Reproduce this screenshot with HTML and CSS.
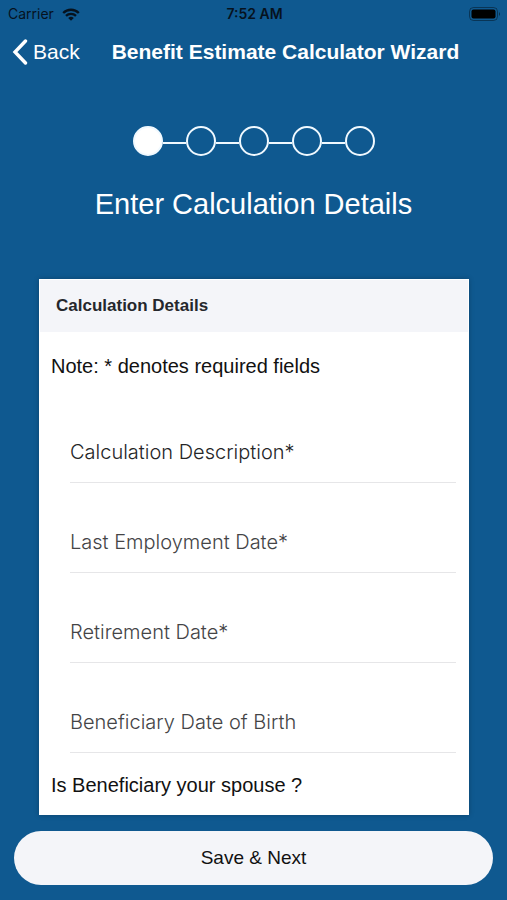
FILE: index.html
```html
<!DOCTYPE html>
<html lang="en">
<head>
  <meta charset="utf-8">
  <meta name="viewport" content="width=device-width, initial-scale=1">
  <title>Benefit Estimate Calculator Wizard</title>
  <link rel="stylesheet" href="styles.css">
</head>
<body>
  <div class="status-bar">
    <div class="carrier">
      <span>Carrier</span>
      <svg class="wifi" viewBox="0 0 18 13" aria-hidden="true">
        <path d="M1.2 5a11 11 0 0 1 15.6 0M4 7.9a7 7 0 0 1 10 0" fill="none" stroke="currentColor" stroke-width="2.3"/>
        <path d="M6.2 10a4 4 0 0 1 5.6 0L9 12.8Z" fill="currentColor"/>
      </svg>
    </div>
    <time class="clock">7:52 AM</time>
    <svg class="battery" viewBox="0 0 32 14" aria-hidden="true">
      <rect x="0.5" y="0.5" width="28" height="13" rx="4" fill="none" stroke="currentColor" opacity="0.4"/>
      <rect x="2.500" y="2.500" width="24" height="9" rx="2" fill="currentColor"/>
      <path d="M30 5q2 2 0 4Z" fill="currentColor" opacity="0.5"/>
    </svg>
  </div>

  <header class="nav">
    <a class="back" href="#">
      <svg class="chevron" viewBox="0 0 16 26" aria-hidden="true">
        <path d="M13.5 2 3 13l10.500 11" fill="none" stroke="currentColor" stroke-width="3.4" stroke-linecap="round"/>
      </svg>
      <span>Back</span>
    </a>
    <h1 class="nav-title">Benefit Estimate Calculator Wizard</h1>
  </header>

  <ol class="steps" aria-label="Progress">
    <li class="step current" aria-current="step"></li>
    <li class="step"></li>
    <li class="step"></li>
    <li class="step"></li>
    <li class="step"></li>
  </ol>
  <h2 class="step-title">Enter Calculation Details</h2>

  <form class="form">
    <section class="card">
      <h3 class="card-header">Calculation Details</h3>
      <p class="note">Note: * denotes required fields</p>
      <div class="fields">
        <input class="field strong" type="text" aria-label="Calculation Description" placeholder="Calculation Description*" required>
        <input class="field" type="text" aria-label="Last Employment Date" placeholder="Last Employment Date*" required>
        <input class="field" type="text" aria-label="Retirement Date" placeholder="Retirement Date*" required>
        <input class="field" type="text" aria-label="Beneficiary Date of Birth" placeholder="Beneficiary Date of Birth">
      </div>
      <p class="question">Is Beneficiary your spouse ?</p>
    </section>
    <button class="save" type="submit">Save &amp; Next</button>
  </form>
</body>
</html>
```
FILE: styles.css
```css
*,
*::before,
*::after {
  box-sizing: border-box;
}

body {
  display: flex;
  flex-direction: column;
  min-height: 100vh;
  margin: 0;
  background: #0f5990;
  color: #fff;
  font-family: "Liberation Sans", Arial, sans-serif;
}

h1,
h2,
h3,
p {
  margin: 0;
}

.status-bar {
  display: grid;
  grid-template-columns: 1fr auto 1fr;
  align-items: center;
  height: 28px;
  padding: 0 6px 0 8px;
  color: #06121e;
  font: 400 14px/16px Inter, sans-serif;
}

.carrier {
  display: flex;
  align-items: center;
  gap: 8px;
}

.wifi {
  width: 18px;
  height: 13px;
}

.clock {
  font-weight: 600;
}

.battery {
  width: 32px;
  height: 14px;
  justify-self: end;
  color: #000;
}

.nav {
  display: flex;
  align-items: center;
  gap: 32px;
  height: 48px;
  padding: 0 12px;
}

.back {
  display: flex;
  align-items: center;
  gap: 5px;
  color: #fff;
  font-size: 21px;
  text-decoration: none;
}

.chevron {
  width: 16px;
  height: 26px;
}

.nav-title {
  font-size: 21px;
  line-height: 24px;
  white-space: nowrap;
}

.steps {
  display: flex;
  justify-content: center;
  margin: 50px 0 0;
  padding: 0;
  list-style: none;
}

.step {
  display: flex;
  align-items: center;
}

.step::after {
  content: "";
  width: 30px;
  height: 30px;
  border: 2px solid #f0f9ff;
  border-radius: 50%;
}

.step + .step::before {
  content: "";
  width: 23px;
  height: 2px;
  margin-top: 4px;
  background: #f0f9ff;
}

.current::after {
  background: #fff;
}

.step-title {
  margin-top: 31px;
  font-size: 29px;
  font-weight: 400;
  line-height: 34px;
  text-align: center;
}

.form {
  display: flex;
  flex: 1;
  flex-direction: column;
  margin-top: 58px;
  padding: 0 14px 15px;
}

.card {
  flex: 1;
  margin: 0 24px 0 25px;
  background: #fff;
  color: #111;
  box-shadow: 0 0 5px rgb(0 0 0 / 25%);
}

.card-header {
  padding: 16px;
  border: 1px solid #fff;
  background: #f4f5f9;
  color: #25272c;
  font-size: 17px;
  line-height: 20px;
}

.note,
.question {
  padding: 0 12px;
  font-size: 20px;
  line-height: 24px;
}

.note {
  padding-top: 21px;
}

.fields {
  padding: 15px 13px 0 31px;
}

.field {
  display: block;
  width: 100%;
  height: 90px;
  padding: 28px 0 0;
  border: 0;
  border-bottom: 1px solid #e6e6e8;
  border-radius: 0;
  outline: 0;
  background: none;
  color: #2e2e30;
  font: 300 20px/24px Inter, sans-serif;
}

.field::placeholder {
  color: #444446;
  opacity: 1;
}

.strong::placeholder {
  color: #252527;
}

.question {
  padding-top: 20px;
}

.save {
  height: 54px;
  margin-top: 16px;
  border: 0;
  border-radius: 27px;
  background: #f4f5f9;
  color: #111;
  font: 400 19px/24px "Liberation Sans", Arial, sans-serif;
}
```
